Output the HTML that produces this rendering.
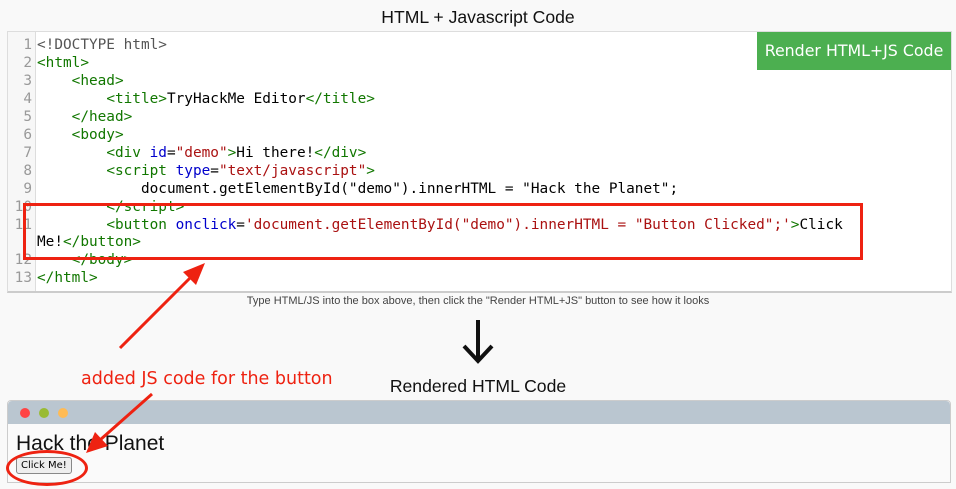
<!DOCTYPE html>
<html><head><style>
body{margin:0;width:956px;height:489px;background:#f9f9f9;font-family:"Liberation Sans",sans-serif;position:relative;overflow:hidden}
.t{position:absolute;left:0;width:956px;text-align:center;font-size:17.6px;color:#111}
.ed{position:absolute;left:7px;top:31px;width:943px;height:259px;background:#fff;border:1px solid #ddd;border-bottom:2px solid #ccc}
.gut{position:absolute;left:0;top:0;width:27px;height:100%;background:#f7f7f7;border-right:1px solid #ddd}
pre{margin:0;font-family:"DejaVu Sans Mono",monospace;font-size:14.4px;line-height:17.95px;position:absolute;top:5px}
.n{left:0;width:24px;text-align:right;color:#999}
.c{left:29px;color:#000}
.g{color:#170}.b{color:#00c}.r{color:#a11}.k{color:#555}
.btn{position:absolute;right:0;top:0;width:194px;height:38px;background:#4caf50;color:#fff;font-family:"DejaVu Sans",sans-serif;font-size:15.8px;line-height:38px;text-align:center}
.win{position:absolute;left:7px;top:400px;width:942px;height:81px;background:#fafafa;border:1px solid #ccc;border-radius:4px 4px 0 0}
.bar{height:23px;background:#bac6d0;border-radius:4px 4px 0 0;position:relative}
.d{position:absolute;top:7px;width:10px;height:10px;border-radius:5px}
</style></head><body>
<div class="t" style="top:7px">HTML + Javascript Code</div>
<div class="ed">
<div class="gut"></div>
<pre class="n">1
2
3
4
5
6
7
8
9
10
11

12
13</pre>
<pre class="c"><span class="k">&lt;!DOCTYPE html&gt;</span>
<span class="g">&lt;html&gt;</span>
    <span class="g">&lt;head&gt;</span>
        <span class="g">&lt;title&gt;</span>TryHackMe Editor<span class="g">&lt;/title&gt;</span>
    <span class="g">&lt;/head&gt;</span>
    <span class="g">&lt;body&gt;</span>
        <span class="g">&lt;div</span> <span class="b">id</span>=<span class="r">"demo"</span><span class="g">&gt;</span>Hi there!<span class="g">&lt;/div&gt;</span>
        <span class="g">&lt;script</span> <span class="b">type</span>=<span class="r">"text/javascript"</span><span class="g">&gt;</span>
            document.getElementById("demo").innerHTML = "Hack the Planet";
        <span class="g">&lt;/script&gt;</span>
        <span class="g">&lt;button</span> <span class="b">onclick</span>=<span class="r">'document.getElementById("demo").innerHTML = "Button Clicked";'</span><span class="g">&gt;</span>Click
Me!<span class="g">&lt;/button&gt;</span>
    <span class="g">&lt;/body&gt;</span>
<span class="g">&lt;/html&gt;</span></pre>
<div class="btn">Render HTML+JS Code</div>
</div>
<div style="position:absolute;left:23px;top:203px;width:834px;height:51px;border:3px solid #e21;"></div>
<div class="t" style="top:295px;font-size:11px;color:#444">Type HTML/JS into the box above, then click the "Render HTML+JS" button to see how it looks</div>
<div style="position:absolute;left:81px;top:369px;color:#e21;font-family:'DejaVu Sans',sans-serif;font-size:17.5px">added JS code for the button</div>
<div class="t" style="top:376px">Rendered HTML Code</div>
<div class="win"><div class="bar">
<div class="d" style="left:12px;background:#f44"></div>
<div class="d" style="left:31px;background:#9b3"></div>
<div class="d" style="left:50px;background:#fb5"></div></div>
<div style="position:absolute;left:8px;top:31px;font-size:21px;color:#111">Hack the Planet</div>
<div style="position:absolute;left:8px;top:56px;border:1px solid #888;border-radius:3px;background:#eee;font-family:'DejaVu Sans',sans-serif;font-size:10px;padding:2px 4px">Click Me!</div>
</div>
<div style="position:absolute;left:6px;top:450px;width:76px;height:30px;border:3px solid #e21;border-radius:50%"></div>
<svg style="position:absolute;left:0;top:0" width="956" height="489">
<path d="M478 320 V360 M464 346 L478 361 L492 346" stroke="#111" stroke-width="4" fill="none"/>
<path d="M120 348 L192 276" stroke="#e21" stroke-width="3"/>
<polygon points="205,263 183,272 196,285" fill="#e21"/>
<path d="M152 394 L100 440" stroke="#e21" stroke-width="3"/>
<polygon points="86,453 95,432 108,446" fill="#e21"/>
</svg>
</body></html>
